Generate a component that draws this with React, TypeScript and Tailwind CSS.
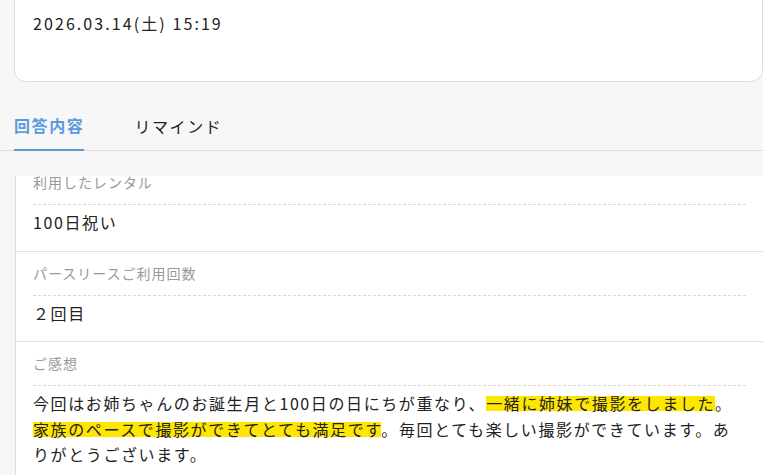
const rows = [
  { label: "利用したレンタル", value: "100日祝い" },
  { label: "パースリースご利用回数", value: "２回目" },
];

const mark =
  "bg-[linear-gradient(transparent_20%,#ffe600_20%,#ffe600_84%,transparent_84%)]";

export default function App() {
  return (
    <div
      className="h-[475px] w-[763px] overflow-hidden bg-[#f7f7f7] text-[#333] tracking-[0.1em]"
      style={{ fontFamily: '"Noto Sans CJK JP", "Noto Sans", sans-serif' }}
    >
      {/* date card */}
      <div className="ml-[14px] -mt-[20px] h-[102px] rounded-[12px] border border-[#dedede] bg-white pl-[18px] pt-[30px]">
        <p className="text-[16px] leading-[24px] tracking-[0.13em] text-[#222]">2026.03.14(土) 15:19</p>
      </div>

      {/* tabs */}
      <div className="mt-[31px] flex gap-[50px] border-b border-[#dcdcdc] pl-[14px]">
        <button className="-mb-px border-b-2 border-[#5b9bdb] pb-[12px] text-[16px] font-bold leading-[24px] text-[#5b9bdb]">
          回答内容
        </button>
        <button className="-mb-px pb-[12px] text-[16px] leading-[24px] text-[#222]">
          リマインド
        </button>
      </div>

      {/* answers */}
      <div className="ml-[15px] mt-[25px] h-[400px] overflow-hidden border-l border-[#dcdcdc] bg-white">
        <div className="-mt-[15px]">
          {rows.map((r) => (
            <div key={r.label} className="border-b border-[#e2e2e2] px-[17px] pt-[10px] pb-[15px]">
              <div className="border-b border-dashed border-[#d8d8d8] pb-[11px] text-[14px] leading-[22px] tracking-[0.07em] text-[#999]">
                {r.label}
              </div>
              <div className="pt-[5px] text-[16px] leading-[25.6px] text-[#222]">{r.value}</div>
            </div>
          ))}
          <div className="px-[17px] pt-[10px] pb-[14px]">
            <div className="border-b border-dashed border-[#d8d8d8] pb-[11px] text-[14px] leading-[22px] tracking-[0.07em] text-[#999]">
              ご感想
            </div>
            <p className="whitespace-nowrap pt-[5px] text-[16px] leading-[25.6px] text-[#222]">
              今回はお姉ちゃんのお誕生月と100日の日にちが重なり、
              <span className={mark}>一緒に姉妹で撮影をしました</span>。
              <br />
              <span className={mark}>家族のペースで撮影ができてとても満足です</span>
              。毎回とても楽しい撮影ができています。あ
              <br />
              りがとうございます。
            </p>
          </div>
        </div>
      </div>
    </div>
  );
}
